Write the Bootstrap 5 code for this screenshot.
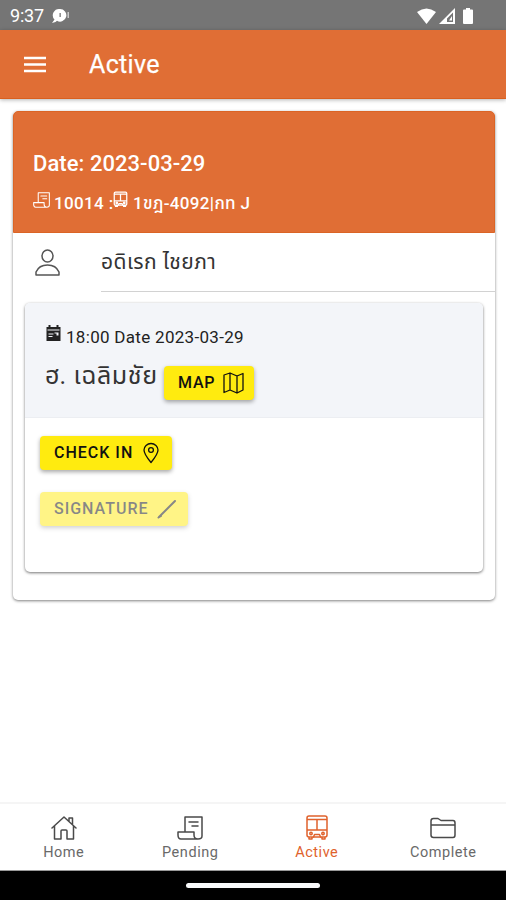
<!DOCTYPE html>
<html lang="th">
<head>
<meta charset="utf-8">
<meta name="viewport" content="width=device-width, initial-scale=1">
<title>Active</title>
<link href="https://cdn.jsdelivr.net/npm/bootstrap@5.3.0/dist/css/bootstrap.min.css" rel="stylesheet">
<style>
body{font-family:Roboto,"Noto Sans Thai","Noto Sans",sans-serif;color:#222;letter-spacing:.3px}
svg{display:block;flex:none;fill:none;stroke:currentColor;stroke-linejoin:round;stroke-linecap:round}
.screen{height:900px;overflow:hidden}
.status-strip{height:30px;background:#757575;font-size:18px;line-height:30px;letter-spacing:-.2px;padding:1px 33px 0 10px}
.status-strip svg{stroke:none;fill:#fff}
.cell-signal{margin-left:3px}
.battery{margin-left:8px}
.app-header{height:69px;background:#e06e35;padding:0 23px;border-bottom:1px solid #d9601f;box-shadow:0 1px 4px rgba(0,0,0,.3);z-index:1}
.app-title{font-size:25px;line-height:30px;margin:1px 0 0 42px;letter-spacing:.35px;font-weight:400;-webkit-text-stroke:.25px #fff}
.job{margin:12px 11px 0 13px;height:489px;border-radius:5px;box-shadow:0 1px 3px rgba(0,0,0,.5)}
.job-head{height:122px;background:#e06e35;border-radius:5px 5px 0 0;padding:38px 19px 0;border:1px solid #db6425}
.job-date{font-size:22px;line-height:28px;font-weight:500;letter-spacing:.05px}
.job-code{font-size:17px;line-height:24px;font-weight:500;margin-top:13px;letter-spacing:.35px;white-space:pre}
.driver{height:60px;padding-left:22px}
.driver svg{color:#555}
.driver-name{height:59px;margin-left:39px;border-bottom:1px solid #d2d2d2;font-size:21px;line-height:58px;letter-spacing:.45px;color:#333}
.stop{margin:10px 12px 0;height:269px;border-radius:5px;box-shadow:0 1px 3px rgba(0,0,0,.55)}
.stop-head{height:115px;background:#f3f5f9;border-bottom:1px solid #eceef2;border-radius:5px 5px 0 0;padding:22px 20px 0}
.stop-time{font-size:17px;line-height:24px;letter-spacing:.3px}
.stop-time span{margin-left:4px}
.stop-time svg{stroke:none}
.stop-place{font-size:25px;line-height:22px;width:119px;white-space:nowrap;letter-spacing:.6px;color:#333}
.btn-task{--bs-btn-bg:#ffeb0f;--bs-btn-color:#111;--bs-btn-disabled-bg:#ffeb0f;--bs-btn-disabled-color:#111;--bs-btn-disabled-opacity:.5;height:34px;padding:0 11px 0 14px;border:0;border-radius:4px;font-size:16px;font-weight:500;letter-spacing:1px;box-shadow:0 2px 4px rgba(0,0,0,.35)}
.btn-map{margin-top:1px;padding-right:10px;letter-spacing:.75px}
.task-list{gap:22px;padding:18px 15px 0}
.tabs-bar{height:69px;border-top:2px solid #f5f5f5;border-bottom:1px solid #999;font-size:14.5px;line-height:18px;letter-spacing:.55px}
.tabs-bar a{color:#696969;padding:11px 0 0 1px}
.tabs-bar svg{color:#4a4a4a}
.tabs-bar span{margin-top:3px}
.tabs-bar a.current,.tabs-bar .current svg{color:#e0622c}
.system-bar{height:29px}
.home-pill{width:134px;height:5px}
</style>
</head>
<body>
<svg width="0" height="0" class="position-absolute">
<symbol id="scroll" viewBox="0 0 26 26"><path d="M8 17V2H25V21Q25 24 21 24H4Q1 24 1 20V17H17V20Q17 24 21 24M12 7H21M15 11H21"/></symbol>
<symbol id="bus" viewBox="0 0 24 26"><path d="M4 1H20Q22 1 22 3V20Q22 22 20 22H4Q2 22 2 20V3Q2 1 4 1ZM2 4.500H22M2 15H22M12 4.500V15M4 22V24H7V22M17 22V24H20V22"/><circle cx="6" cy="18.500" r="1.200"/><circle cx="18" cy="18.500" r="1.200"/><path d="M8.500 22 9.500 19.500H14.500L15.500 22"/></symbol>
</svg>
<div class="screen d-flex flex-column bg-white">
  <div class="status-strip d-flex align-items-center text-white">
    <span>9:37</span>
    <svg class="ms-2" width="18" height="16" viewBox="0 0 18 16"><path fill-rule="evenodd" d="M8 1a6.300 6.300 0 1 1-3 11.800L3.500 14 0 15 2.500 11.500A6.300 6.300 0 0 1 8 1ZM7.500 5v4h1.300V5Z"/><path opacity=".6" d="M15.500 4h1.500v6h-1.500Z"/></svg>
    <svg class="ms-auto" width="19" height="16" viewBox="0 0 19 16"><path d="M0 4Q9.500-3 19 4L9.500 16Z"/></svg>
    <svg class="cell-signal" width="16" height="16" viewBox="0 0 16 16"><path fill-rule="evenodd" d="M0 16 16 0V16ZM8 14h6V4.500l-6 6ZM10 12.500 13 8v4.500Z"/></svg>
    <svg class="battery" width="10" height="16" viewBox="0 0 10 16"><path d="M3 0h4v1.500h2q1 0 1 1V15q0 1-1 1H1q-1 0-1-1V2.500q0-1 1-1h2Z"/></svg>
  </div>
  <header class="app-header d-flex align-items-center text-white position-relative">
    <svg width="24" height="18" viewBox="0 0 24 18" stroke-width="2.500"><path stroke-linecap="butt" d="M1 3H23M1 9.500H23M1 16H23"/></svg>
    <h1 class="app-title">Active</h1>
  </header>
  <main class="flex-grow-1">
    <section class="job bg-white">
      <div class="job-head text-white">
        <div class="job-date">Date: 2023-03-29</div>
        <div class="job-code d-flex"><svg width="17" height="18" stroke-width="1.600"><use href="#scroll"/></svg><span class="ms-1">10014 :</span><svg width="15" height="17" stroke-width="2"><use href="#bus"/></svg><span> 1ขฎ-4092|กท J</span></div>
      </div>
      <div class="driver d-flex">
        <svg class="mt-3" width="27" height="28" viewBox="0 0 27 28" stroke-width="1.500"><ellipse cx="12.500" cy="7" rx="5.500" ry="6"/><path d="M1 26V23Q4 16 12.500 16T24 23V26Z"/></svg>
        <div class="driver-name flex-grow-1">อดิเรก ไชยภา</div>
      </div>
      <div class="stop">
        <div class="stop-head">
          <div class="stop-time d-flex"><svg width="17" height="17" viewBox="0 0 16 17"><path fill="#222" fill-rule="evenodd" d="M1 2H3V0H5V2H11V0H13V2H15V16H1ZM2 4.500V5.500H14V4.500ZM9 7.500H13V10.500H11V8.500H9ZM3 8.500H8V9.500H3ZM3 11H7V12H3Z"/></svg><span>18:00 Date 2023-03-29</span></div>
          <div class="d-flex mt-3">
            <div class="stop-place">ฮ. เฉลิมชัย</div>
            <button class="btn btn-task btn-map d-flex align-items-center">MAP<svg class="ms-2" width="21" height="22" viewBox="0 0 21 22" stroke-width="1.300"><path d="M1 3 7 1 14 4 20 1.500V18L14 21 7 18 1 20.500ZM7 1V18M14 4V21"/></svg></button>
          </div>
        </div>
        <div class="d-flex flex-column align-items-start task-list">
          <button class="btn btn-task d-flex align-items-center">CHECK IN<svg class="ms-2" width="20" height="22" viewBox="0 0 20 22" stroke-width="1.300"><path d="M10 20.500Q3 12 3 8A7 6.500 0 0 1 17 8Q17 12 10 20.500Z"/><circle cx="10" cy="8" r="2.400"/></svg></button>
          <button class="btn btn-task d-flex align-items-center" disabled>SIGNATURE<svg class="ms-2" width="20" height="20" viewBox="0 0 20 20" stroke-width="2"><path d="M2 18 18 2M1.500 18.500 4 17"/></svg></button>
        </div>
      </div>
    </section>
  </main>
  <nav class="tabs-bar d-flex bg-white">
    <a class="col-3 d-flex flex-column align-items-center text-decoration-none" href="#"><svg width="26" height="26" viewBox="0 0 26 26" stroke-width="1.500"><path d="M1 13 13 2 25 13M3.500 11V24H10V16Q10 15 11 15H15Q16 15 16 16V24H22.500V11M18 6V3H21.500V9"/></svg><span>Home</span></a>
    <a class="col-3 d-flex flex-column align-items-center text-decoration-none" href="#"><svg width="26" height="26" stroke-width="1.500"><use href="#scroll"/></svg><span>Pending</span></a>
    <a class="col-3 d-flex flex-column align-items-center text-decoration-none current" href="#"><svg width="24" height="26" stroke-width="1.500"><use href="#bus"/></svg><span>Active</span></a>
    <a class="col-3 d-flex flex-column align-items-center text-decoration-none" href="#"><svg width="26" height="26" viewBox="0 0 26 26" stroke-width="1.500"><path d="M1 9V6Q1 3.500 3.500 3.500H8L11 5.500H23Q25 5.500 25 8V20Q25 22.500 23 22.500H3.500Q1 22.500 1 20ZM1 10H25"/></svg><span>Complete</span></a>
  </nav>
  <div class="system-bar bg-black d-flex justify-content-center align-items-center"><div class="home-pill bg-light rounded"></div></div>
</div>
<script src="https://cdn.jsdelivr.net/npm/bootstrap@5.3.0/dist/js/bootstrap.bundle.min.js"></script>
</body>
</html>
